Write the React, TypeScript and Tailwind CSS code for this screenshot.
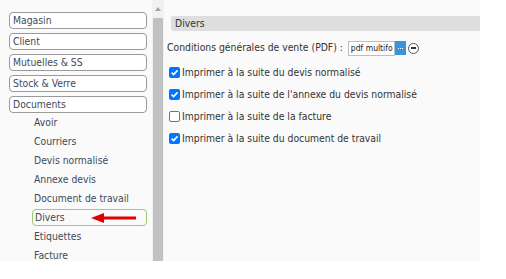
const menu = ["Magasin", "Client", "Mutuelles & SS", "Stock & Verre", "Documents"];
const subs = ["Avoir", "Courriers", "Devis normalisé", "Annexe devis", "Document de travail", "Divers", "Etiquettes", "Facture"];
const options = [
  { label: "Imprimer à la suite du devis normalisé", checked: true },
  { label: "Imprimer à la suite de l'annexe du devis normalisé", checked: true },
  { label: "Imprimer à la suite de la facture", checked: false },
  { label: "Imprimer à la suite du document de travail", checked: true },
];

function Box({ checked }: { checked: boolean }) {
  if (!checked) {
    return <span className="w-[11px] h-[11px] rounded-[2px] border border-[#767676] bg-white shrink-0" />;
  }
  return (
    <span className="w-[11px] h-[11px] rounded-[2px] bg-[#0075ff] shrink-0 flex items-center justify-center">
      <svg width="9" height="9" viewBox="0 0 10 10">
        <path d="M1.8 5.2 L4 7.4 L8.4 2.6" fill="none" stroke="white" strokeWidth="1.8" />
      </svg>
    </span>
  );
}

export default function App() {
  return (
    <div className="w-[506px] h-[279px] bg-white flex items-start text-[10.3px] font-['DejaVu_Sans_Condensed','DejaVu_Sans',sans-serif] overflow-hidden">
      {/* sidebar */}
      <div className="w-[152px] h-[261px] bg-[#fafafa] pt-[12px] pl-[9px] pr-[5px] flex flex-col">
        <div className="flex flex-col gap-[4px]">
          {menu.map((m) => (
            <div key={m} className="h-[17px] border border-[#9a9a9a] rounded-[4px] bg-white px-[3px] flex items-center text-[#3c4a58]">
              {m}
            </div>
          ))}
        </div>
        <div className="flex flex-col">
          {subs.map((s) =>
            s === "Divers" ? (
              <div key={s} className="relative h-[17px] my-[1px] ml-[23px] border border-[#9ccb6b] rounded-[4px] pl-[2px] flex items-center text-[#3c4a58]">
                {s}
                <svg className="absolute left-[58px] top-[3px]" width="45" height="10" viewBox="0 0 45 10">
                  <path d="M45 5 H12" stroke="#e00000" strokeWidth="3" />
                  <path d="M0 5 L13 0 V10 Z" fill="#e00000" />
                </svg>
              </div>
            ) : (
              <div key={s} className="h-[19px] pl-[25px] flex items-center text-[#3c4a58]">
                {s}
              </div>
            )
          )}
        </div>
      </div>
      {/* scrollbar */}
      <div className="w-[12px] h-[261px] bg-[#f1f1f1] flex flex-col items-center">
        <div className="h-[18px] flex items-center justify-center">
          <svg width="6" height="4" viewBox="0 0 6 4">
            <path d="M0 4 L3 0 L6 4 Z" fill="#a3a3a3" />
          </svg>
        </div>
        <div className="w-[10px] flex-1 bg-[#c1c1c1]" />
      </div>
      {/* content */}
      <div className="w-[316px] h-[261px] bg-[#fafafa] pt-[16px] pl-[3px] text-[#333]">
        <div className="ml-[4px] h-[15px] bg-[#dedede] rounded-l-[3px] pl-[4px] flex items-center">Divers</div>
        <div className="mt-[9px] flex items-center h-[16px]">
          <span>Conditions générales de vente (PDF) :</span>
          <span className="ml-[5px] w-[47px] h-[15px] border border-[#bdbdbd] bg-white pl-[2px] text-[8.5px] leading-[13px] overflow-hidden whitespace-nowrap text-[#222]">pdf multifo</span>
          <span className="w-[11px] h-[14px] bg-[#3a93dd] flex items-center justify-center gap-[1px]">
            <span className="w-[1px] h-[1px] bg-white" />
            <span className="w-[1px] h-[1px] bg-white" />
            <span className="w-[1px] h-[1px] bg-white" />
          </span>
          <span className="ml-[2px] w-[11px] h-[11px] rounded-full border border-[#555] bg-white flex items-center justify-center">
            <span className="w-[5px] h-[2px] bg-[#333]" />
          </span>
        </div>
        <div className="mt-[10px] flex flex-col gap-[9px] pl-[2px]">
          {options.map((o) => (
            <div key={o.label} className="h-[13px] flex items-center gap-[2px]">
              <Box checked={o.checked} />
              <span>{o.label}</span>
            </div>
          ))}
        </div>
      </div>
    </div>
  );
}
